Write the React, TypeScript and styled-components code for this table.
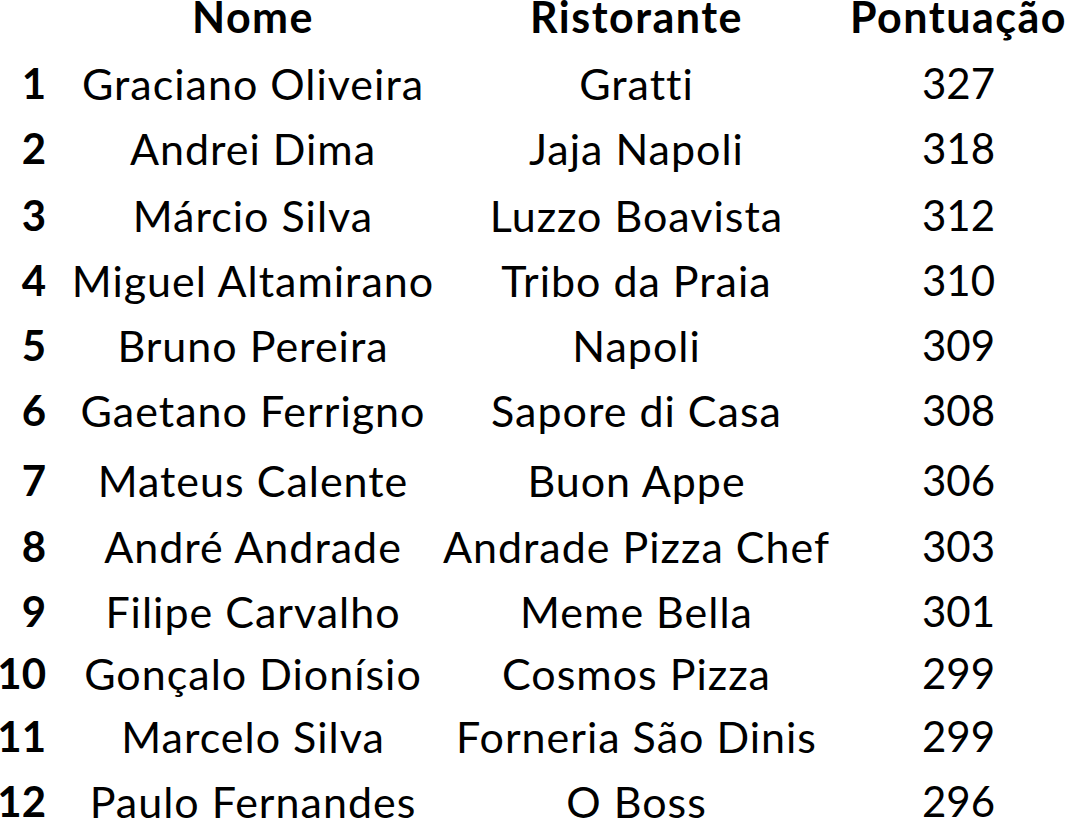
import * as React from "react"
import styled, { createGlobalStyle } from "styled-components"

const GlobalStyle = createGlobalStyle`
    html, body {
        margin: 0;
        padding: 0;
        background: #ffffff;
        overflow: hidden;
    }
    body {
        font-family: Lato, "Open Sans", sans-serif;
        color: #000000;
    }
`

type Entry = { rank: number; name: string; restaurant: string; score: number; height: number }

// row heights follow the uneven spacing of the original sheet
const entries: Entry[] = [
    { rank: 1, name: "Graciano Oliveira", restaurant: "Gratti", score: 327, height: 65 },
    { rank: 2, name: "Andrei Dima", restaurant: "Jaja Napoli", score: 318, height: 67 },
    { rank: 3, name: "Márcio Silva", restaurant: "Luzzo Boavista", score: 312, height: 65 },
    { rank: 4, name: "Miguel Altamirano", restaurant: "Tribo da Praia", score: 310, height: 65 },
    { rank: 5, name: "Bruno Pereira", restaurant: "Napoli", score: 309, height: 65 },
    { rank: 6, name: "Gaetano Ferrigno", restaurant: "Sapore di Casa", score: 308, height: 70 },
    { rank: 7, name: "Mateus Calente", restaurant: "Buon Appe", score: 306, height: 66 },
    { rank: 8, name: "André Andrade", restaurant: "Andrade Pizza Chef", score: 303, height: 65 },
    { rank: 9, name: "Filipe Carvalho", restaurant: "Meme Bella", score: 301, height: 62 },
    { rank: 10, name: "Gonçalo Dionísio", restaurant: "Cosmos Pizza", score: 299, height: 63 },
    { rank: 11, name: "Marcelo Silva", restaurant: "Forneria São Dinis", score: 299, height: 65 },
    { rank: 12, name: "Paulo Fernandes", restaurant: "O Boss", score: 296, height: 65 },
]

export default function App() {
    return (
        <>
            <GlobalStyle />
            <Table>
                <HeaderRow>
                    <Cell />
                    <HeaderCell>Nome</HeaderCell>
                    <HeaderCell>Ristorante</HeaderCell>
                    <HeaderCell>Pontuação</HeaderCell>
                </HeaderRow>
                {entries.map(e => (
                    <Row key={e.rank} $h={e.height}>
                        <RankCell>{e.rank}</RankCell>
                        <TextCell>{e.name}</TextCell>
                        <TextCell>{e.restaurant}</TextCell>
                        <NumberCell>{e.score}</NumberCell>
                    </Row>
                ))}
            </Table>
        </>
    )
}

const Table = styled.div`
    width: 1102px;
    display: flex;
    flex-direction: column;
    font-size: 43px;
`

const Row = styled.div<{ $h?: number }>`
    display: grid;
    grid-template-columns: 48px 410px 357px 287px;
    height: ${p => p.$h ?? 65}px;
    line-height: 65px;
    flex-shrink: 0;
`

const HeaderRow = styled(Row)`
    height: 51px;
    line-height: 34px;
`

const Cell = styled.div`
    display: flex;
    justify-content: center;
    white-space: nowrap;
    min-width: 0;
`

const TextCell = styled(Cell)`
    letter-spacing: 1px;
`

const NumberCell = styled(Cell)`
    font-size: 42px;
`

const HeaderCell = styled(Cell)`
    font-weight: 700;
    letter-spacing: 1.5px;
`

const RankCell = styled(Cell)`
    justify-content: flex-end;
    font-weight: 700;
    font-size: 42px;
    padding-right: 2px;
`
